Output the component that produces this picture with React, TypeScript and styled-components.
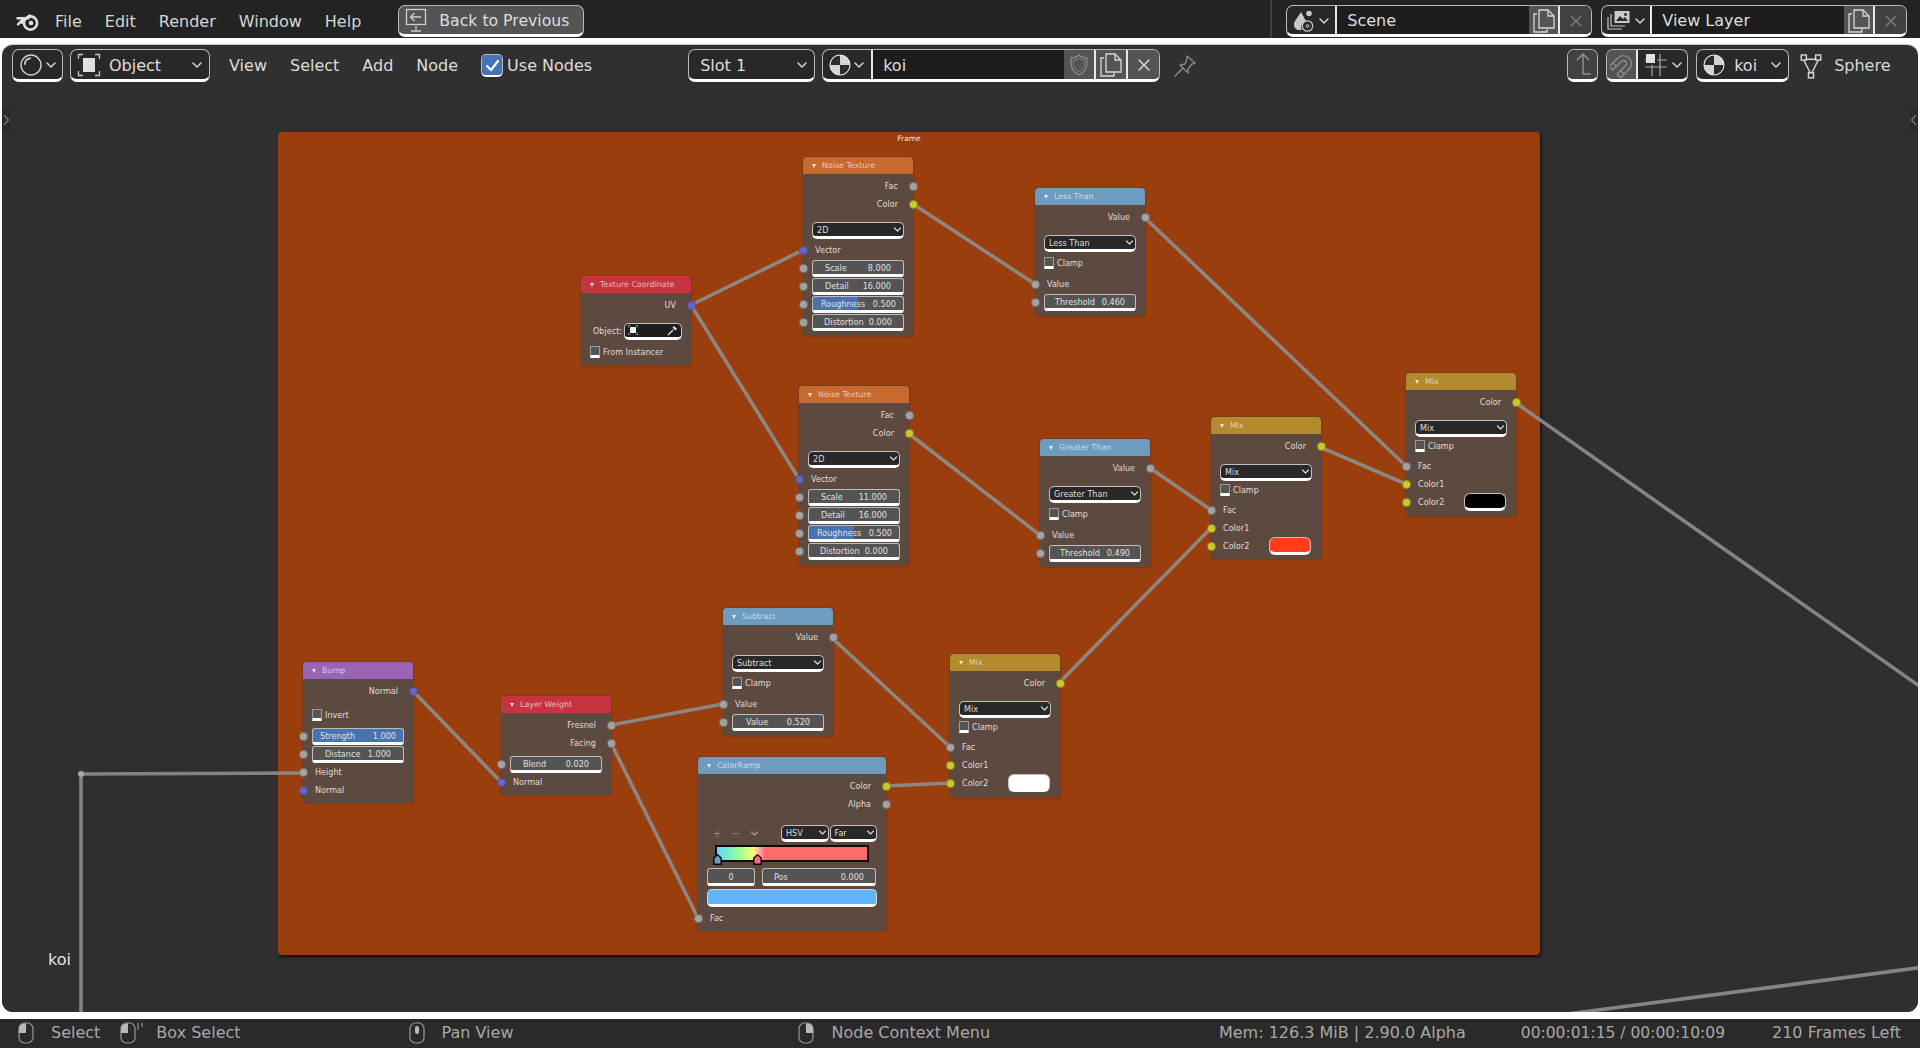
import React from "react";
import styled, { createGlobalStyle, css } from "styled-components";

const OX = 2;
const OY = 84;
const FONT = `"DejaVu Sans", "Liberation Sans", sans-serif`;

const Global = createGlobalStyle`
  html, body { margin: 0; padding: 0; background: #fff; }
  #root { width: 1920px; height: 1048px; }
`;

const Page = styled.div`
  width: 1920px;
  height: 1048px;
  overflow: hidden;
  display: flex;
  flex-direction: column;
  background: #fff;
  font-family: ${FONT};
  font-size: 16px;
  color: #d9d9d9;
`;

const TopBar = styled.header`
  height: 38px;
  flex: none;
  background: #232323;
  display: flex;
  align-items: center;
  padding: 4px 12px 0 16px;
  box-sizing: border-box;
`;

const Menu = styled.nav<{ $ml?: number; $gap?: number }>`
  display: flex;
  gap: ${(p) => p.$gap ?? 23}px;
  margin-left: ${(p) => p.$ml ?? 0}px;
  white-space: nowrap;
  color: #d6d6d6;
`;

const widgetFrame = css`
  box-sizing: border-box;
  border: 1px solid #b9b9b9;
  border-bottom: 3px solid #fff;
  border-radius: 7px;
  overflow: hidden;
`;

const BackButton = styled.div`
  ${widgetFrame}
  width: 186px;
  height: 32px;
  margin-left: 37px;
  background: #545454;
  color: #dedede;
  font-size: 15.7px;
  display: flex;
  align-items: center;
  gap: 12px;
  padding: 1px 0 0 6px;
  white-space: nowrap;
`;

const Divider = styled.div<{ $ml?: number }>`
  width: 2px;
  height: 38px;
  margin-top: -4px;
  background: #3f3f3f;
  margin-left: ${(p) => p.$ml ?? 0}px;
  flex: none;
`;

const Group = styled.div<{ $w: number; $h?: number; $ml?: number }>`
  ${widgetFrame}
  width: ${(p) => p.$w}px;
  height: ${(p) => p.$h ?? 33}px;
  margin-left: ${(p) => p.$ml ?? 0}px;
  flex: none;
  display: flex;
  background: #282828;
`;

const Cell = styled.div<{ $w?: number; $bg?: string; $pad?: number; $line?: boolean; $between?: boolean }>`
  ${(p) => (p.$w ? `width:${p.$w}px;flex:none;` : "flex:1;min-width:0;")}
  background: ${(p) => p.$bg ?? "transparent"};
  display: flex;
  align-items: center;
  justify-content: ${(p) => (p.$pad !== undefined ? (p.$between ? "space-between" : "flex-start") : "center")};
  padding: 1px ${(p) => (p.$between ? 6 : 0)}px 0 ${(p) => p.$pad ?? 0}px;
  gap: 2px;
  box-sizing: border-box;
  white-space: nowrap;
  color: #dedede;
  ${(p) => (p.$line ? "border-right: 2px solid #e8e8e8;" : "")}
`;

const CellLabel = styled.span<{ $gap: number }>`
  display: flex;
  align-items: center;
  gap: ${(p) => p.$gap}px;
`;

const Editor = styled.section`
  flex: none;
  height: 968px;
  margin: 6px 2px 0;
  border-radius: 11px;
  background: #303030;
  border-top: 1px solid #c9c9c9;
  box-sizing: border-box;
  display: flex;
  flex-direction: column;
  overflow: hidden;
  position: relative;
`;

const Header = styled.div`
  height: 39px;
  flex: none;
  display: flex;
  align-items: flex-start;
  padding: 4px 29px 0 10px;
  box-sizing: border-box;
  white-space: nowrap;
`;

const HeaderCheck = styled.div<{ $ml: number }>`
  display: flex;
  align-items: center;
  gap: 4px;
  margin: 5px 0 0 ${(p) => p.$ml}px;
  color: #dedede;
  height: 23px;
`;

const CheckBox = styled.div`
  width: 22px;
  height: 23px;
  box-sizing: border-box;
  border-radius: 5px;
  background: #4772b3;
  border: 1px solid #b9b9b9;
  border-bottom: 2px solid #fff;
  display: flex;
  align-items: center;
  justify-content: center;
`;

const HeadMenu = styled(Menu)`
  height: 33px;
  align-items: center;
  color: #dcdcdc;
`;

const Plain = styled.div<{ $ml: number; $w?: number }>`
  margin-left: ${(p) => p.$ml}px;
  height: 33px;
  display: flex;
  align-items: center;
  flex: none;
  ${(p) => (p.$w ? `width:${p.$w}px;` : "")}
`;

const Canvas = styled.div`
  flex: 1;
  position: relative;
  overflow: hidden;
  background: #2f2f2f;
`;

const SideTab = styled.div<{ $right?: boolean }>`
  position: absolute;
  top: 24px;
  ${(p) => (p.$right ? "right: 0;" : "left: 0;")}
  width: 9px;
  height: 24px;
  background: #2a2a2a;
  display: flex;
  align-items: center;
  justify-content: center;
`;

const Frame = styled.div`
  position: absolute;
  left: ${278 - OX}px;
  top: ${132 - OY}px;
  width: 1262px;
  height: 823px;
  background: #9b3e0e;
  border-radius: 4px;
  box-shadow: 1px 2px 3px rgba(0, 0, 0, 0.7);
  text-align: center;
  font-size: 7.5px;
  line-height: 14px;
  color: #f0e4dc;
`;

const Links = styled.svg`
  position: absolute;
  left: 0;
  top: 0;
`;

const Reroute = styled.div`
  position: absolute;
  left: ${78 - OX}px;
  top: ${771 - OY}px;
  width: 6px;
  height: 6px;
  border-radius: 50%;
  background: #a8a8a8;
`;

const CanvasLabel = styled.div`
  position: absolute;
  left: ${48 - OX}px;
  top: ${950 - OY}px;
  color: #e4e4e4;
`;

const NodeBox = styled.div<{ $x: number; $y: number; $w: number; $h: number }>`
  position: absolute;
  left: ${(p) => p.$x - OX}px;
  top: ${(p) => p.$y - OY}px;
  width: ${(p) => p.$w}px;
  height: ${(p) => p.$h}px;
  box-sizing: border-box;
  background: #5c4a40;
  border-radius: 4px;
  box-shadow: 0 0 0 1px #7c3a18, 1px 1px 1px #70340f;
  font-size: 8.1px;
  color: #e0dcd8;
  display: flex;
  flex-direction: column;
  white-space: nowrap;
`;

const NodeHead = styled.div<{ $c: string }>`
  height: 17px;
  flex: none;
  margin-bottom: 3px;
  background: ${(p) => p.$c};
  border-radius: 4px 4px 0 0;
  display: flex;
  align-items: center;
  gap: 6px;
  padding-left: 9px;
  font-size: 7.9px;
  color: rgba(255, 255, 255, 0.66);
`;

const Tri = styled.span`
  width: 0;
  height: 0;
  border-left: 2.5px solid transparent;
  border-right: 2.5px solid transparent;
  border-top: 4.5px solid rgba(255, 255, 255, 0.8);
`;

const Row = styled.div<{ $mt?: number; $end?: boolean; $pad?: number; $gap?: number }>`
  position: relative;
  height: 18px;
  flex: none;
  margin-top: ${(p) => p.$mt ?? 0}px;
  display: flex;
  align-items: center;
  justify-content: ${(p) => (p.$end ? "flex-end" : "flex-start")};
  padding: 0 ${(p) => (p.$end ? 15 : 0)}px 0 ${(p) => p.$pad ?? (p.$end ? 0 : 12)}px;
  gap: ${(p) => p.$gap ?? 0}px;
`;

const SOCK = { g: "#a3a3a3", y: "#c9c92b", b: "#6565cc" };

const Socket = styled.span<{ $k: keyof typeof SOCK; $right?: boolean }>`
  position: absolute;
  top: 4.5px;
  ${(p) => (p.$right ? "right: -4.5px;" : "left: -4.5px;")}
  width: 9px;
  height: 9px;
  box-sizing: border-box;
  border-radius: 50%;
  background: ${(p) => SOCK[p.$k]};
  border: 1px solid rgba(50, 40, 30, 0.4);
`;

const CtlRow = styled(Row)`
  padding: 0 9px;
`;

const Dropdown = styled.div`
  flex: 1;
  height: 17px;
  box-sizing: border-box;
  background: #282828;
  border: 1px solid #c8c0bc;
  border-bottom: 3px solid #fff;
  border-radius: 5px;
  display: flex;
  align-items: center;
  justify-content: space-between;
  padding: 1px 1px 0 4px;
  color: #dedede;
`;

const Field = styled.div<{ $fill?: number; $pl?: number; $pr?: number }>`
  flex: 1;
  height: 17px;
  box-sizing: border-box;
  background: ${(p) =>
    p.$fill ? `linear-gradient(90deg, #4772b3 ${p.$fill}%, #545454 ${p.$fill}%)` : "#545454"};
  border: 1px solid #c2bcb8;
  border-bottom: 3px solid #fff;
  border-radius: 3px;
  display: flex;
  align-items: center;
  justify-content: space-between;
  padding: 1px ${(p) => p.$pr ?? 12}px 0 ${(p) => p.$pl ?? 12}px;
  color: #e0e0e0;
`;

const Swatch = styled.div<{ $c: string; $w?: number }>`
  width: ${(p) => p.$w ?? 42}px;
  height: 18px;
  box-sizing: border-box;
  background: ${(p) => p.$c};
  border: 1px solid #c8c0bc;
  border-bottom: 3px solid #fff;
  border-radius: 6px;
  margin-left: auto;
  margin-right: 10px;
`;

const NodeCheck = styled.span`
  width: 10px;
  height: 12px;
  box-sizing: border-box;
  background: #545454;
  border: 1px solid #9c9c9c;
  border-bottom: 3px solid #fff;
  border-radius: 1px;
  margin-right: 3px;
`;

const Picker = styled.div`
  width: 58px;
  height: 17px;
  margin-left: 2px;
  box-sizing: border-box;
  background: #1d1d1d;
  border: 1px solid #c8c0bc;
  border-bottom: 3px solid #fff;
  border-radius: 5px;
  display: flex;
  align-items: center;
  justify-content: space-between;
  padding: 0 3px;
`;

const RampTools = styled.div`
  width: 73px;
  display: flex;
  align-items: center;
  color: #8d8580;
  font-size: 10px;
  gap: 10px;
  padding-left: 6px;
  box-sizing: border-box;
`;

const RampBar = styled.div`
  position: relative;
  height: 17px;
  flex: none;
  margin: 3px 0 0 17px;
  width: 154px;
  box-sizing: border-box;
  border: 2px solid #0c0c0c;
  background: linear-gradient(90deg, #5fd6ff 0%, #78f5c0 9%, #a8ff8c 16%, #f4ff80 24%, #ff8fa0 30%, #ff6b6b 32%, #ff6b6b 100%);
`;

const RampHandle = styled.span<{ $x: number }>`
  position: absolute;
  left: ${(p) => p.$x}px;
  top: 7px;
  display: flex;
`;

const Wide = styled.div<{ $mt: number }>`
  height: 18px;
  flex: none;
  margin: ${(p) => p.$mt}px 9px 0;
  display: flex;
  gap: 7px;
`;

const SmallField = styled(Field)<{ $w: number }>`
  flex: none;
  width: ${(p) => p.$w}px;
  height: 18px;
  justify-content: ${(p) => (p.$w < 60 ? "center" : "space-between")};
`;

const BigSwatch = styled.div`
  height: 18px;
  flex: none;
  margin: 3px 9px 0;
  box-sizing: border-box;
  background: #60b5ff;
  border: 1px solid #d8d0cc;
  border-bottom: 3px solid #fff;
  border-radius: 5px;
`;

const Status = styled.footer`
  height: 29px;
  flex: none;
  margin-top: 7px;
  background: #2a2a2a;
  color: #a8a8a8;
  display: flex;
  align-items: center;
  white-space: nowrap;
  padding: 0 19px 2px 0;
  box-sizing: border-box;
`;

const StatusItem = styled.span<{ $ml: number; $auto?: boolean; $fs?: number }>`
  margin-left: ${(p) => (p.$auto ? "auto" : `${p.$ml}px`)};
  display: flex;
  align-items: center;
  ${(p) => (p.$fs ? `font-size:${p.$fs}px;` : "")}
`;

const Chevron = ({ c = "#cfcfcf", s = 12 }: { c?: string; s?: number }) => (
  <svg width={s} height={s} viewBox="0 0 12 12" fill="none">
    <path d="M2 4l4 4 4-4" stroke={c} strokeWidth="1.6" strokeLinecap="round" strokeLinejoin="round" />
  </svg>
);

const SideChevron = ({ left }: { left?: boolean }) => (
  <svg width="7" height="12" viewBox="0 0 7 12" fill="none">
    <path d={left ? "M5.500 1.500L1.500 6l4 4.500" : "M1.500 1.500l4 4.500-4 4.500"} stroke="#777" strokeWidth="1.500" strokeLinecap="round" strokeLinejoin="round" />
  </svg>
);

const BlenderLogo = () => (
  <svg width="24" height="22" viewBox="0 0 24 22" fill="none">
    <circle cx="14.5" cy="13" r="6.6" stroke="#e0e0e0" strokeWidth="2.6" />
    <circle cx="15" cy="13" r="2.3" fill="#e0e0e0" />
    <path d="M1.5 8.3h11M5.6 12.8L14 5.4M8 8.3L2 14.3" stroke="#e0e0e0" strokeWidth="2.4" strokeLinecap="round" />
  </svg>
);

const BackIcon = () => (
  <svg width="22" height="26" viewBox="0 0 22 26" fill="none" stroke="#cfcfcf" strokeWidth="1.3">
    <rect x="1.5" y="1.5" width="19" height="15" />
    <path d="M11 18v4M6 23h10" />
    <path d="M16 9H5.5M9.5 5L5.5 9l4 4" strokeLinejoin="round" />
  </svg>
);

const SceneIcon = () => (
  <svg width="24" height="26" viewBox="0 0 24 26" fill="none">
    <path d="M9 4l5 9c-4 1-6 5-4 9H6c-4-1-5-6-3-9z" fill="#c8c8c8" />
    <circle cx="17" cy="5.5" r="2.8" fill="#c8c8c8" />
    <circle cx="15.5" cy="18" r="5.2" stroke="#c8c8c8" strokeWidth="1.3" />
    <circle cx="15.5" cy="18" r="1.4" stroke="#c8c8c8" />
  </svg>
);

const LayerIcon = () => (
  <svg width="26" height="26" viewBox="0 0 26 26" fill="none" stroke="#c8c8c8" strokeWidth="1.2">
    <path d="M2 9v12h14M5 6v12h14" />
    <rect x="8.5" y="3" width="15" height="12" fill="#c8c8c8" stroke="none" />
    <path d="M10 13l4-5 3 3 2-2 3 4z" fill="#282828" stroke="none" />
    <circle cx="19.5" cy="6.5" r="1.4" fill="#282828" stroke="none" />
  </svg>
);

const CopyIcon = () => (
  <svg width="24" height="26" viewBox="0 0 24 26" fill="none" stroke="#d8d8d8" strokeWidth="1.3">
    <path d="M5 6H2v18h13v-3" />
    <path d="M7 2h9l6 6v12H7z" />
    <path d="M16 2v6h6" />
  </svg>
);

const XIcon = ({ c = "#d8d8d8" }: { c?: string }) => (
  <svg width="16" height="16" viewBox="0 0 16 16" fill="none">
    <path d="M3 3l10 10M13 3L3 13" stroke={c} strokeWidth="1.5" strokeLinecap="round" />
  </svg>
);

const ShieldIcon = () => (
  <svg width="20" height="24" viewBox="0 0 20 24" fill="none" stroke="#8b8b8b" strokeWidth="1.3">
    <path d="M10 2c2 2 5 3 8 3 0 8 0 13-8 17C2 18 2 13 2 5c3 0 6-1 8-3z" />
    <path d="M10 5c1.5 1.2 3.500 2 5.500 2.200 0 5.500-.5 9-5.500 11.800C5 16.200 4.500 12.700 4.500 7.200 6.500 7 8.500 6.200 10 5z" strokeWidth=".8" />
  </svg>
);

const PinIcon = () => (
  <svg width="24" height="24" viewBox="0 0 24 24" fill="none" stroke="#8a8a8a" strokeWidth="1.4" strokeLinejoin="round">
    <path d="M14 2l8 7-3 1-4 5 0 4-8-8 5-1 2-5z" />
    <path d="M10 14l-8 8" strokeLinecap="round" />
  </svg>
);

const SphereIcon = ({ s = 22 }: { s?: number }) => (
  <svg width={s} height={s} viewBox="0 0 22 22">
    <circle cx="11" cy="11" r="10" fill="#d4d4d4" />
    <path d="M11 11V1A10 10 0 0 0 1 11z" fill="#2b2b2b" />
    <path d="M11 11h10A10 10 0 0 1 11 21z" fill="#2b2b2b" />
    <circle cx="11" cy="11" r="10" fill="none" stroke="#e8e8e8" strokeWidth="1.1" />
  </svg>
);

const EditorIcon = () => (
  <svg width="24" height="24" viewBox="0 0 24 24" fill="none">
    <circle cx="12" cy="12" r="10" stroke="#d0d0d0" strokeWidth="1.4" />
    <path d="M6 11c0-3 2-5.500 5-5.500" stroke="#d0d0d0" strokeWidth="1.8" strokeLinecap="round" />
  </svg>
);

const ObjectIcon = () => (
  <svg width="24" height="24" viewBox="0 0 24 24" fill="none" stroke="#c8c8c8" strokeWidth="1.3">
    <path d="M1.500 6V1.500H6M18 1.500h4.500V6M22.500 18v4.500H18M6 22.500H1.500V18" />
    <rect x="6" y="5" width="12" height="14" fill="#e0e0e0" stroke="none" />
  </svg>
);

const UpIcon = () => (
  <svg width="24" height="26" viewBox="0 0 24 26" fill="none" stroke="#8e8e8e" strokeWidth="1.5">
    <path d="M6 8l6-6 6 6M12 2v20h8" strokeLinejoin="round" />
  </svg>
);

const MagnetIcon = () => (
  <svg width="24" height="26" viewBox="0 0 24 26" fill="none" stroke="#8d8d8d" strokeWidth="1.4" strokeLinejoin="round">
    <g transform="rotate(45 12 13)">
      <path d="M4 23V11a8 8 0 0 1 16 0v12h-5V11a3 3 0 0 0-6 0v12z" />
      <path d="M4 18h5M15 18h5" />
    </g>
  </svg>
);

const SnapIcon = () => (
  <svg width="26" height="26" viewBox="0 0 26 26" fill="none" stroke="#a8a8a8" strokeWidth="1.2">
    <path d="M17 2v22M9 13v11M2 15h22M2 8h4M14 8h10" />
    <rect x="3" y="2" width="9" height="9" fill="#e0e0e0" stroke="none" />
  </svg>
);

const VertexIcon = () => (
  <svg width="22" height="26" viewBox="0 0 26 30" fill="none" stroke="#d8d8d8" strokeWidth="1.7">
    <path d="M4 7h18L13 25z" />
    <rect x="1.500" y="2" width="6" height="6" fill="#303030" />
    <rect x="18.500" y="2" width="6" height="6" fill="#303030" />
    <rect x="10" y="23" width="6" height="6" fill="#303030" />
  </svg>
);

const Eyedropper = () => (
  <svg width="11" height="11" viewBox="0 0 11 11" fill="none">
    <path d="M1 10l5-5M6 2l3 3" stroke="#e8e8e8" strokeWidth="1.3" />
    <path d="M7 1l3 3-1.500 1L6 3z" fill="#e8e8e8" />
  </svg>
);

const TinyCube = () => (
  <svg width="10" height="10" viewBox="0 0 10 10" fill="none" stroke="#bbb" strokeWidth=".7">
    <path d="M.5 2.500v-2h2M7.500.5h2v2M9.500 7.500v2h-2M2.500 9.500h-2v-2" />
    <rect x="2" y="2" width="6" height="6" fill="#eee" stroke="none" />
  </svg>
);

const Mouse = ({ part }: { part: "l" | "r" | "m" }) => (
  <svg width="16" height="22" viewBox="0 0 16 22" fill="none">
    <rect x="1" y="1" width="14" height="20" rx="5.5" stroke="#9a9a9a" strokeWidth="1.2" />
    {part === "l" && <path d="M8 1.500H6.500A5.500 5.500 0 0 0 1 7v4h7z" fill="#b9b9b9" />}
    {part === "r" && <path d="M8 1.500h1.500A5.500 5.500 0 0 1 15 7v4H8z" fill="#b9b9b9" />}
    {part === "m" && <rect x="6" y="4" width="4" height="8" rx="2" fill="#b9b9b9" />}
  </svg>
);

const BoxMouse = () => (
  <svg width="24" height="22" viewBox="0 0 24 22" fill="none">
    <rect x="1" y="1" width="14" height="20" rx="5.5" stroke="#9a9a9a" strokeWidth="1.2" />
    <path d="M8 1.500H6.500A5.500 5.500 0 0 0 1 7v4h7z" fill="#b9b9b9" />
    <path d="M18 1v7M22 1v4" stroke="#9a9a9a" strokeWidth="1.1" />
  </svg>
);

const Handle = ({ c }: { c: string }) => (
  <svg width="9" height="11" viewBox="0 0 9 11">
    <path d="M4.500 .8L8.200 4v6.200H.8V4z" fill={c} stroke="#0a0a0a" strokeWidth="1.500" strokeLinejoin="round" />
  </svg>
);

const Node: React.FC<{
  x: number;
  y: number;
  w?: number;
  h: number;
  c: string;
  title: string;
  children: React.ReactNode;
}> = ({ x, y, w = 110, h, c, title, children }) => (
  <NodeBox $x={x} $y={y} $w={w} $h={h}>
    <NodeHead $c={c}>
      <Tri />
      {title}
    </NodeHead>
    {children}
  </NodeBox>
);

const Out = ({ t, k, mt }: { t: string; k: keyof typeof SOCK; mt?: number }) => (
  <Row $end $mt={mt}>
    {t}
    <Socket $k={k} $right />
  </Row>
);

const In = ({ t, k, mt }: { t: string; k: keyof typeof SOCK; mt?: number }) => (
  <Row $mt={mt}>
    <Socket $k={k} />
    {t}
  </Row>
);

const Drop = ({ t, mt }: { t: string; mt: number }) => (
  <CtlRow $mt={mt}>
    <Dropdown>
      {t}
      <Chevron s={9} c="#d8d8d8" />
    </Dropdown>
  </CtlRow>
);

const Val = ({
  l,
  v,
  fill,
  pl,
  pr,
  mt,
}: {
  l: string;
  v: string;
  fill?: number;
  pl?: number;
  pr?: number;
  mt?: number;
}) => (
  <CtlRow $mt={mt}>
    <Socket $k="g" />
    <Field $fill={fill} $pl={pl} $pr={pr}>
      <span>{l}</span>
      <span>{v}</span>
    </Field>
  </CtlRow>
);

const Check = ({ t, mt }: { t: string; mt: number }) => (
  <Row $pad={9} $mt={mt}>
    <NodeCheck />
    {t}
  </Row>
);

const ColorIn = ({ t, c }: { t: string; c: string }) => (
  <Row>
    <Socket $k="y" />
    {t}
    <Swatch $c={c} />
  </Row>
);

const BLUE = "#6d9cbf";
const GOLD = "#b38a2d";
const RED = "#c5353f";
const ORANGE = "#c8692f";

const LINKS: [number, number, number, number][] = [
  [691, 305, 803, 250],
  [691, 305, 799, 479],
  [913, 204, 1035, 284],
  [1145, 218, 1406, 466],
  [908, 433, 1040, 535],
  [1150, 468, 1211, 510],
  [1320, 447, 1406, 484],
  [1516, 403, 1925, 690],
  [413, 691, 501, 782],
  [611, 725, 723, 704],
  [611, 743, 698, 918],
  [832, 638, 950, 747],
  [886, 786, 950, 783],
  [1059, 683, 1211, 528],
  [81, 774, 303, 773],
  [81, 774, 81, 1015],
  [1925, 967, 1560, 1015],
];

const NoiseBody = ({ sv }: { sv: string }) => (
  <>
    <Out t="Fac" k="g" />
    <Out t="Color" k="y" />
    <Drop t="2D" mt={8} />
    <In t="Vector" k="b" mt={2} />
    <Val l="Scale" v={sv} />
    <Val l="Detail" v="16.000" />
    <Val l="Roughness" v="0.500" fill={50} pl={8} pr={7} />
    <Val l="Distortion" v="0.000" pl={11} pr={11} />
  </>
);

const MathBody = ({ t, l, v }: { t: string; l: string; v: string }) => (
  <>
    <Out t="Value" k="g" />
    <Drop t={t} mt={8} />
    <Check t="Clamp" mt={2} />
    <In t="Value" k="g" mt={3} />
    <Val l={l} v={v} pl={l === "Threshold" ? 10 : 13} pr={l === "Threshold" ? 10 : 13} />
  </>
);

const MixBody = ({ swatch }: { swatch: string }) => (
  <>
    <Out t="Color" k="y" />
    <Drop t="Mix" mt={8} />
    <Check t="Clamp" mt={0} />
    <In t="Fac" k="g" mt={2} />
    <In t="Color1" k="y" />
    <ColorIn t="Color2" c={swatch} />
  </>
);

export default function App() {
  return (
    <>
      <Global />
      <Page>
        <TopBar>
          <BlenderLogo />
          <Menu $ml={15}>
            <span>File</span>
            <span>Edit</span>
            <span>Render</span>
            <span>Window</span>
            <span>Help</span>
          </Menu>
          <BackButton>
            <BackIcon />
            Back to Previous
          </BackButton>
          <Divider $ml={686} />
          <Group $w={306} $h={32} $ml={14}>
            <Cell $w={50} $line>
              <SceneIcon />
              <Chevron />
            </Cell>
            <Cell $bg="#1d1d1d" $pad={10}>
              Scene
            </Cell>
            <Cell $w={31} $bg="#545454" $line>
              <CopyIcon />
            </Cell>
            <Cell $w={31} $bg="#414141">
              <XIcon c="#7c7c7c" />
            </Cell>
          </Group>
          <Group $w={306} $h={32} $ml={9}>
            <Cell $w={50} $line>
              <LayerIcon />
              <Chevron />
            </Cell>
            <Cell $bg="#1d1d1d" $pad={10}>
              View Layer
            </Cell>
            <Cell $w={31} $bg="#545454" $line>
              <CopyIcon />
            </Cell>
            <Cell $w={31} $bg="#414141">
              <XIcon c="#7c7c7c" />
            </Cell>
          </Group>
        </TopBar>

        <Editor>
          <Header>
            <Group $w={51}>
              <Cell>
                <EditorIcon />
                <Chevron />
              </Cell>
            </Group>
            <Group $w={140} $ml={7}>
              <Cell $pad={6} $between>
                <CellLabel $gap={8}>
                  <ObjectIcon />
                  Object
                </CellLabel>
                <Chevron />
              </Cell>
            </Group>
            <HeadMenu $ml={19}>
              <span>View</span>
              <span>Select</span>
              <span>Add</span>
              <span>Node</span>
            </HeadMenu>
            <HeaderCheck $ml={23}>
              <CheckBox>
                <svg width="15" height="13" viewBox="0 0 15 13" fill="none">
                  <path d="M2 7l4 4 7-9" stroke="#fff" strokeWidth="2.2" strokeLinecap="round" strokeLinejoin="round" />
                </svg>
              </CheckBox>
              Use Nodes
            </HeaderCheck>
            <Group $w={127} $ml={96}>
              <Cell $pad={11} $between>
                Slot 1
                <Chevron />
              </Cell>
            </Group>
            <Group $w={338} $ml={7}>
              <Cell $w={50} $line>
                <SphereIcon />
                <Chevron />
              </Cell>
              <Cell $bg="#1d1d1d" $pad={10}>
                koi
              </Cell>
              <Cell $w={32} $bg="#545454" $line>
                <ShieldIcon />
              </Cell>
              <Cell $w={32} $bg="#545454" $line>
                <CopyIcon />
              </Cell>
              <Cell $w={31} $bg="#545454">
                <XIcon />
              </Cell>
            </Group>
            <Plain $ml={13}>
              <PinIcon />
            </Plain>
            <Group $w={31} $ml={370}>
              <Cell $bg="#414141">
                <UpIcon />
              </Cell>
            </Group>
            <Group $w={82} $ml={8}>
              <Cell $w={31} $bg="#545454" $line>
                <MagnetIcon />
              </Cell>
              <Cell>
                <SnapIcon />
                <Chevron />
              </Cell>
            </Group>
            <Group $w={93} $ml={8}>
              <Cell $pad={6} $between>
                <CellLabel $gap={9}>
                  <SphereIcon />
                  koi
                </CellLabel>
                <Chevron />
              </Cell>
            </Group>
            <Plain $ml={11}>
              <VertexIcon />
            </Plain>
            <Plain $ml={12}>Sphere</Plain>
          </Header>

          <Canvas>
            <SideTab>
              <SideChevron />
            </SideTab>
            <SideTab $right>
              <SideChevron left />
            </SideTab>
            <Frame>Frame</Frame>
            <Links width="1916" height="928" viewBox={`${OX} ${OY} 1916 928`} fill="none">
              {LINKS.map(([a, b, c, d], i) => (
                <line key={i} x1={a} y1={b} x2={c} y2={d} stroke="rgba(140,140,140,0.92)" strokeWidth="3.6" />
              ))}
            </Links>
            <Reroute />
            <CanvasLabel>koi</CanvasLabel>

            <Node x={581} y={276} h={89} c={RED} title="Texture Coordinate">
              <Out t="UV" k="b" />
              <Row $mt={8} $pad={12}>
                Object:
                <Picker>
                  <TinyCube />
                  <Eyedropper />
                </Picker>
              </Row>
              <Check t="From Instancer" mt={3} />
            </Node>

            <Node x={803} y={157} h={179} c={ORANGE} title="Noise Texture">
              <NoiseBody sv="8.000" />
            </Node>
            <Node x={799} y={386} h={179} c={ORANGE} title="Noise Texture">
              <NoiseBody sv="11.000" />
            </Node>

            <Node x={1035} y={188} h={128} c={BLUE} title="Less Than">
              <MathBody t="Less Than" l="Threshold" v="0.460" />
            </Node>
            <Node x={1040} y={439} h={128} c={BLUE} title="Greater Than">
              <MathBody t="Greater Than" l="Threshold" v="0.490" />
            </Node>
            <Node x={723} y={608} h={128} c={BLUE} title="Subtract">
              <MathBody t="Subtract" l="Value" v="0.520" />
            </Node>

            <Node x={1211} y={417} h={142} c={GOLD} title="Mix">
              <MixBody swatch="#ff3d17" />
            </Node>
            <Node x={1406} y={373} h={143} c={GOLD} title="Mix">
              <MixBody swatch="#000000" />
            </Node>
            <Node x={950} y={654} h={143} c={GOLD} title="Mix">
              <MixBody swatch="#ffffff" />
            </Node>

            <Node x={303} y={662} h={141} c="#9a64b5" title="Bump">
              <Out t="Normal" k="b" />
              <Check t="Invert" mt={6} />
              <Val l="Strength" v="1.000" fill={100} pl={7} pr={7} mt={3} />
              <Val l="Distance" v="1.000" />
              <In t="Height" k="g" />
              <In t="Normal" k="b" />
            </Node>

            <Node x={501} y={696} h={99} c={RED} title="Layer Weight">
              <Out t="Fresnel" k="g" />
              <Out t="Facing" k="g" />
              <Val l="Blend" v="0.020" mt={3} />
              <In t="Normal" k="b" />
            </Node>

            <Node x={698} y={757} w={188} h={174} c={BLUE} title="ColorRamp">
              <Out t="Color" k="y" />
              <Out t="Alpha" k="g" />
              <CtlRow $mt={11} $gap={1}>
                <RampTools>
                  <span>+</span>
                  <span>−</span>
                  <Chevron s={9} c="#a89e98" />
                </RampTools>
                <Dropdown>
                  HSV
                  <Chevron s={9} c="#d8d8d8" />
                </Dropdown>
                <Dropdown>
                  Far
                  <Chevron s={9} c="#d8d8d8" />
                </Dropdown>
              </CtlRow>
              <RampBar>
                <RampHandle $x={-4}>
                  <Handle c="#6d9cbf" />
                </RampHandle>
                <RampHandle $x={36}>
                  <Handle c="#ff6b8a" />
                </RampHandle>
              </RampBar>
              <Wide $mt={6}>
                <SmallField $w={48}>0</SmallField>
                <SmallField $w={114} $pl={11} $pr={11}>
                  <span>Pos</span>
                  <span>0.000</span>
                </SmallField>
              </Wide>
              <BigSwatch />
              <In t="Fac" k="g" mt={2} />
            </Node>
          </Canvas>
        </Editor>

        <Status>
          <StatusItem $ml={18}>
            <Mouse part="l" />
          </StatusItem>
          <StatusItem $ml={17}>Select</StatusItem>
          <StatusItem $ml={20}>
            <BoxMouse />
          </StatusItem>
          <StatusItem $ml={12}>Box Select</StatusItem>
          <StatusItem $ml={168}>
            <Mouse part="m" />
          </StatusItem>
          <StatusItem $ml={17}>Pan View</StatusItem>
          <StatusItem $ml={285}>
            <Mouse part="r" />
          </StatusItem>
          <StatusItem $ml={17}>Node Context Menu</StatusItem>
          <StatusItem $ml={0} $auto>
            Mem: 126.3 MiB | 2.90.0 Alpha
          </StatusItem>
          <StatusItem $ml={55} $fs={15.5}>
            00:00:01:15 / 00:00:10:09
          </StatusItem>
          <StatusItem $ml={47}>210 Frames Left</StatusItem>
        </Status>
      </Page>
    </>
  );
}
